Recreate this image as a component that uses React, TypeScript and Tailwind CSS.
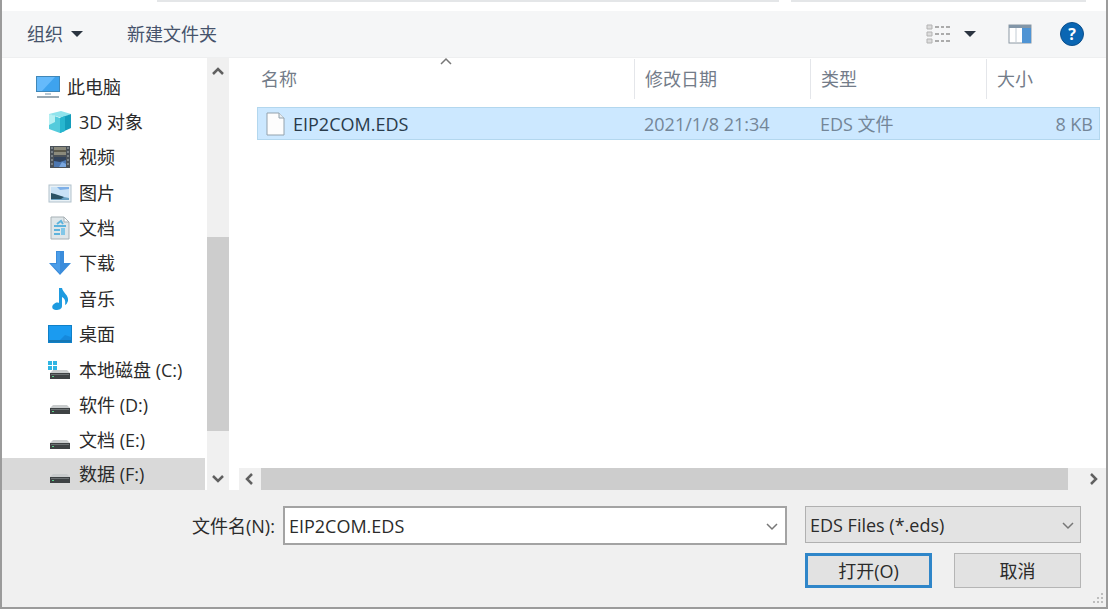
import type { ReactNode } from 'react';

const PcIcon = () => (
    <svg viewBox="0 0 26 24" className="w-[26px] h-6 shrink-0" aria-hidden="true">
        <rect x="1" y="1" width="24" height="16" fill="#3f87b8" />
        <path d="M2 2h22v14H2z" fill="#3ea3ee" />
        <path d="M2 2h18L7 16H2z" fill="#65bafb" />
        <path d="M10 18h6v2h-6z" fill="#b9c9d4" />
        <path d="M2 21h22v2H2z" fill="#9aa9b3" />
    </svg>
);

const CubeIcon = () => (
    <svg viewBox="0 0 24 24" className="size-6" aria-hidden="true">
        <path d="M1 4 13 1l10 3-9 4z" fill="#8fe3ec" />
        <path d="M1 4l11 4v15L1 19z" fill="#54cbdc" />
        <path d="M1 4l6 2v6l-6 3z" fill="#b5f0f3" />
        <path d="M12 8l11-4v14l-11 5z" fill="#149dbb" />
        <path d="M12 8l5-2v15l-5 2z" fill="#27b6cf" />
    </svg>
);

const VideoIcon = () => (
    <svg viewBox="0 0 24 24" className="size-6" aria-hidden="true">
        <rect x="2" y="1" width="20" height="22" fill="#4a5158" />
        <rect x="6" y="2" width="12" height="8" fill="#8b8a7c" />
        <path d="M6 5h12v2H6z" fill="#5b594c" />
        <rect x="6" y="12" width="12" height="10" fill="#4d77b0" />
        <path d="M6 12h12v3l-6 2-6-1z" fill="#30425c" />
        <path d="M11 22l3-5 4 2v3z" fill="#7aa7df" />
        <path d="M4 2v20M20 2v20" stroke="#8a9297" strokeWidth="1.5" strokeDasharray="2 2" />
    </svg>
);

const PictureIcon = () => (
    <svg viewBox="0 0 24 24" className="size-6" aria-hidden="true">
        <rect x="1" y="4" width="22" height="17" fill="#e9f1f6" stroke="#b1c1cc" />
        <rect x="3" y="6" width="18" height="13" fill="#c9e2f6" />
        <path d="M9 6h12v2l-9 1z" fill="#7fb0e8" />
        <path d="M3 14l8 1 10 2v2H3z" fill="#6ba3c4" />
        <path d="M3 12l4 1 9 3-3 2H3z" fill="#2b5366" />
    </svg>
);

const DocIcon = () => (
    <svg viewBox="0 0 24 24" className="size-6" aria-hidden="true">
        <path d="M3 1h13l5 5v17H3z" fill="#dfe6e9" stroke="#a7b1b6" />
        <path d="M16 1v5h5z" fill="#f8fafb" stroke="#a7b1b6" />
        <path d="M6 10h12M6 14h6M6 18h6" stroke="#5eb3dc" strokeWidth="2" />
        <path d="M9 8l4-3 2 3" stroke="#5eb3dc" strokeWidth="2" fill="none" />
        <rect x="13" y="12" width="4" height="7" fill="#82c7e8" />
    </svg>
);

const DownloadIcon = () => (
    <svg viewBox="0 0 24 24" className="size-6" aria-hidden="true">
        <path d="M8 0h8v12h7L12 24 1 12h7z" fill="#3b8cdb" />
        <path d="M9 1h3v21L3 13h6z" fill="#4b9de8" />
    </svg>
);

const MusicIcon = () => (
    <svg viewBox="0 0 24 24" className="size-6" aria-hidden="true">
        <path d="M11 1h3c1 5 7 7 6 13-1 2-1 3-3 4 1-5-1-7-3-8v9c0 3-3 4-6 4-4 0-5-4-2-6 1-1 3-2 5-1z" fill="#1e9be0" />
    </svg>
);

const DesktopIcon = () => (
    <svg viewBox="0 0 24 24" className="size-6" aria-hidden="true">
        <rect y="3" width="24" height="18" fill="#0f80c8" />
        <rect x="1" y="4" width="22" height="14" fill="#1b9bf0" />
        <path d="M12 18l5-5 6 2v3z" fill="#1589dc" />
        <path d="M1 18h22v2H1z" fill="#1577b4" />
    </svg>
);

const DriveIcon = ({ system }: { system?: boolean }) => (
    <svg viewBox="0 0 24 24" className="size-6" aria-hidden="true">
        <path d="M5 12h14l3 3H2z" fill="#c9cccd" />
        <rect x="2" y="15" width="20" height="6" fill="#3e4244" />
        <path d="M3 16h18v1H3z" fill="#6b7072" />
        <path d="M4 18h2v1H4z" fill="#5bd08a" />
        {system && <path d="M0 3h4v4H0zM5 3h4v4H5zM0 8h4v4H0zM5 8h4v4H5z" fill="#2fb5e3" />}
    </svg>
);

const FileIcon = () => (
    <svg viewBox="0 0 20 24" className="w-5 h-6 shrink-0" aria-hidden="true">
        <path d="M1 1h12l5 5v17H1z" fill="#fdfdfd" stroke="#93a2ad" />
        <path d="M13 1v5h5" fill="#e9eef1" stroke="#93a2ad" />
    </svg>
);

const arrows = {
    up: 'M2 9l5-5 5 5',
    down: 'M2 5l5 5 5-5',
    left: 'M9 2L4 7l5 5',
    right: 'M5 2l5 5-5 5',
};

const Arrow = ({ dir, thin }: { dir: keyof typeof arrows; thin?: boolean }) => (
    <svg viewBox="0 0 14 14" className="size-3.5" fill="none" stroke={thin ? '#777' : '#606060'} strokeWidth={thin ? 1.5 : 2.5} aria-hidden="true">
        <path d={arrows[dir]} />
    </svg>
);

const Caret = () => (
    <svg viewBox="0 0 12 8" className="w-3 h-2" aria-hidden="true">
        <path d="M0 1h12L6 7z" fill="#2b3440" />
    </svg>
);

const places: { name: string; icon: ReactNode }[] = [
    { name: '3D 对象', icon: <CubeIcon /> },
    { name: '视频', icon: <VideoIcon /> },
    { name: '图片', icon: <PictureIcon /> },
    { name: '文档', icon: <DocIcon /> },
    { name: '下载', icon: <DownloadIcon /> },
    { name: '音乐', icon: <MusicIcon /> },
    { name: '桌面', icon: <DesktopIcon /> },
    { name: '本地磁盘 (C:)', icon: <DriveIcon system /> },
    { name: '软件 (D:)', icon: <DriveIcon /> },
    { name: '文档 (E:)', icon: <DriveIcon /> },
];

function Toolbar() {
    return (
        <div className="h-[47px] shrink-0 flex items-center pl-[25px] pr-[22px] bg-[#f5f6f7] border-b border-[#eeeff0] text-[#46536b]">
            <button type="button" className="flex items-center gap-2">
                组织 <Caret />
            </button>
            <button type="button" className="ml-11">新建文件夹</button>
            <button type="button" aria-label="视图" className="ml-auto flex items-center gap-3.5">
                <svg viewBox="0 0 24 20" className="w-6 h-5" fill="none" aria-hidden="true">
                    <path d="M1 1h5v4H1zM1 8h5v4H1zM1 15h5v4H1z" fill="#dcdcdc" stroke="#b3b3b3" />
                    <path d="M9 3h4M15 3h3M20 3h4M9 10h4M15 10h3M20 10h4M9 17h4M15 17h3M20 17h4" stroke="#929292" strokeWidth="1.5" />
                </svg>
                <Caret />
            </button>
            <button type="button" aria-label="预览窗格" className="ml-8">
                <svg viewBox="0 0 24 20" className="w-6 h-5" aria-hidden="true">
                    <rect x="1" y="1" width="22" height="18" fill="#fff" stroke="#8c98a3" />
                    <path d="M1 1h22v3H1z" fill="#8296a8" />
                    <path d="M8 4v15" stroke="#c3ccd4" />
                    <rect x="14" y="4" width="9" height="15" fill="#4f94d4" />
                </svg>
            </button>
            <button type="button" aria-label="帮助" className="ml-7 size-6 rounded-full bg-[#0a66b3] border border-[#0c4f8c] text-white text-base leading-none font-bold">
                ?
            </button>
        </div>
    );
}

function Sidebar() {
    return (
        <nav className="w-[227px] shrink-0 flex">
            <ul className="flex-1 flex flex-col pt-[11px] pr-0.5 text-[#2b2b2b]">
                <li className="flex-1 flex items-center gap-1.5 pl-[33px]">
                    <PcIcon />
                    此电脑
                </li>
                {places.map((place) => (
                    <li key={place.name} className="flex-1 flex items-center gap-[7px] pl-[46px]">
                        {place.icon}
                        {place.name}
                    </li>
                ))}
                <li className="h-8 flex items-center gap-[7px] pl-[46px] bg-[#d9d9d9]">
                    <DriveIcon />
                    数据 (F:)
                </li>
            </ul>
            <div className="w-[22px] flex flex-col bg-[#f0f0f0]">
                <button type="button" aria-label="向上滚动" className="h-7 flex items-center justify-center">
                    <Arrow dir="up" />
                </button>
                <div className="grow-[151]" />
                <div className="grow-[194] bg-[#cdcdcd]" />
                <div className="grow-[35]" />
                <button type="button" aria-label="向下滚动" className="h-6 flex items-center justify-center">
                    <Arrow dir="down" />
                </button>
            </div>
        </nav>
    );
}

function FileList() {
    return (
        <main className="flex-1 min-w-0 flex flex-col pl-2.5">
            <div className="flex-1 pl-[18px] pr-1.5">
                <table className="w-full table-fixed border-separate border-spacing-0 text-left">
                    <thead>
                        <tr className="h-[49px] text-[#737c89]">
                            <th className="relative pl-1 pb-2 font-normal">
                                名称
                                <span className="absolute inset-x-0 top-[-3px] flex justify-center">
                                    <Arrow dir="up" thin />
                                </span>
                            </th>
                            <th className="w-44 p-0 font-normal">
                                <div className="h-10 mb-2 flex items-center pl-2.5 border-l border-[#e4e6ea]">修改日期</div>
                            </th>
                            <th className="w-44 p-0 font-normal">
                                <div className="h-10 mb-2 flex items-center pl-2.5 border-l border-[#e4e6ea]">类型</div>
                            </th>
                            <th className="w-[114px] p-0 font-normal">
                                <div className="h-10 mb-2 flex items-center pl-2.5 border-l border-[#e4e6ea]">大小</div>
                            </th>
                        </tr>
                    </thead>
                    <tbody>
                        <tr className="h-[33px] bg-[#cce8ff] text-[#748698]">
                            <td className="p-0 pl-2 border-y border-l border-[#b3d7ee] text-[#2a3b4b]">
                                <div className="flex items-center gap-[7px]">
                                    <FileIcon />
                                    EIP2COM.EDS
                                </div>
                            </td>
                            <td className="p-0 pl-2.5 border-y border-[#b3d7ee] whitespace-nowrap">2021/1/8 21:34</td>
                            <td className="p-0 pl-2.5 border-y border-[#b3d7ee]">EDS 文件</td>
                            <td className="p-0 pr-1.5 border-y border-r border-[#b3d7ee] text-right">8 KB</td>
                        </tr>
                    </tbody>
                </table>
            </div>
            <div className="h-[22px] shrink-0 flex bg-[#f0f0f0]">
                <button type="button" aria-label="向左滚动" className="w-[22px] flex items-center justify-center">
                    <Arrow dir="left" />
                </button>
                <div className="flex-1 bg-[#cdcdcd]" />
                <button type="button" aria-label="向右滚动" className="w-[38px] flex items-center justify-end pr-1.5">
                    <Arrow dir="right" />
                </button>
            </div>
        </main>
    );
}

function Footer() {
    return (
        <form className="relative shrink-0 pt-4 pr-[25px] pb-[19px] pl-[190px] bg-[#f0f0f0] text-[#2b2b2b]">
            <div className="flex items-start gap-[18px]">
                <div className="flex-1 flex items-center gap-2">
                    <label htmlFor="filename" className="whitespace-nowrap">文件名(N):</label>
                    <div className="flex-1 h-[39px] flex items-center bg-white border-2 border-[#a3a3a3] pr-1.5">
                        <input id="filename" type="text" defaultValue="EIP2COM.EDS" className="flex-1 min-w-0 pl-1 outline-none" />
                        <button type="button" aria-label="文件名列表">
                            <Arrow dir="down" thin />
                        </button>
                    </div>
                </div>
                <div className="relative w-[276px]">
                    <select aria-label="文件类型" className="w-full h-[37px] pl-1 appearance-none bg-[#e3e3e3] border border-[#b0b0b0]">
                        <option>EDS Files (*.eds)</option>
                    </select>
                    <span className="absolute right-1.5 top-3 pointer-events-none">
                        <Arrow dir="down" thin />
                    </span>
                </div>
            </div>
            <div className="mt-2 flex justify-end gap-[22px]">
                <button type="submit" className="w-[127px] h-[35px] bg-[#e2e2e2] border-[3px] border-[#2f86c9]">打开(O)</button>
                <button type="button" className="w-[127px] h-[35px] bg-[#e2e2e2] border border-[#b5b5b5]">取消</button>
            </div>
            <svg viewBox="0 0 12 12" className="absolute right-0.5 bottom-0.5 size-3" fill="#bdbdbd" aria-hidden="true">
                <path d="M9 0h2v2H9zM9 4h2v2H9zM5 4h2v2H5zM9 8h2v2H9zM5 8h2v2H5zM1 8h2v2H1z" />
            </svg>
        </form>
    );
}

export default function App() {
    return (
        <div className="min-h-screen flex flex-col bg-white border-x-2 border-b-2 border-[#9b9b9b] font-['Open_Sans','Noto_Sans_CJK_SC',sans-serif] text-[18px] leading-6">
            {/* lower edges of the address bar and the search box */}
            <div className="h-[11px] shrink-0 flex gap-3 pl-[155px] pr-5">
                <div className="flex-1 h-0.5 bg-[#e4e6e8]" />
                <div className="w-[295px] h-0.5 bg-[#e4e6e8]" />
            </div>
            <Toolbar />
            <div className="flex-1 flex">
                <Sidebar />
                <FileList />
            </div>
            <Footer />
        </div>
    );
}
